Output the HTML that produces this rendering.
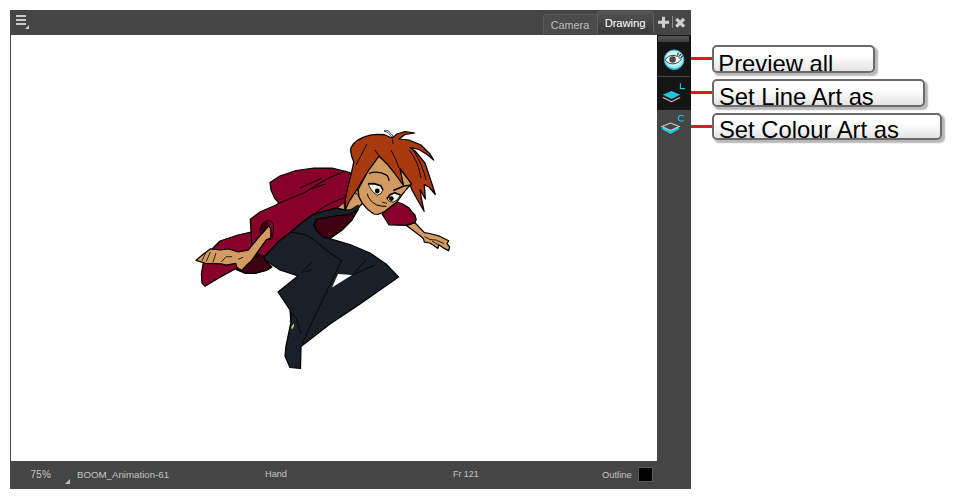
<!DOCTYPE html>
<html><head><meta charset="utf-8">
<style>
html,body{margin:0;padding:0;background:#fff;}
body{width:957px;height:499px;position:relative;overflow:hidden;font-family:"Liberation Sans",sans-serif;}
.abs{position:absolute;}
#panel{left:10px;top:10px;width:681px;height:479px;background:#454545;}
#canvas{left:11px;top:35px;width:646px;height:426px;background:#fff;}
.tab{font-size:10px;color:#c8c8c8;text-align:center;box-sizing:border-box;}
#tabCam{left:543px;top:14px;width:55px;height:20px;background:#4b4b4b;border:1px solid #5a5a5a;border-bottom:none;border-radius:3px 3px 0 0;line-height:21px;color:#bdbdbd;font-size:10.8px;text-indent:-1px;}
#tabDraw{left:597px;top:11px;width:57px;height:22px;background:linear-gradient(#525252,#3a3a3a);border:1px solid #5e5e5e;border-bottom:none;border-radius:3px 3px 0 0;line-height:22px;color:#fff;font-size:11.3px;letter-spacing:-0.1px;text-indent:-1px;}
#tbar{left:657px;top:35px;width:33.5px;height:74.5px;background:#151515;}
#handle{left:658px;top:36px;width:31px;height:6px;background:linear-gradient(#565656,#3e3e3e);}
#sep1{left:657px;top:76px;width:33px;height:1px;background:#4a4a4a;}
.red{height:3px;background:#e2181e;left:691px;width:22px;}
.box{left:712px;box-sizing:border-box;border:2px solid #6a6a6a;border-radius:5px;background:linear-gradient(#ffffff 35%,#e4e4e4);box-shadow:2.5px 2.5px 1.5px #b8b8b8;overflow:hidden;font-size:23.8px;color:#000;white-space:nowrap;}
.box span{position:absolute;left:5px;top:3.5px;line-height:26px;}
.st{font-size:9.7px;color:#c6c6c6;top:469px;line-height:11px;white-space:nowrap;}
</style></head><body>
<div id="panel" class="abs"></div>
<div id="canvas" class="abs"></div>
<!-- menu icon -->
<svg class="abs" style="left:14px;top:13px" width="18" height="18" viewBox="14 13 18 18">
<rect x="16" y="15" width="10" height="2" fill="#c9c9c9"/><rect x="16" y="19" width="10" height="2" fill="#c9c9c9"/><rect x="16" y="23" width="10" height="2" fill="#c9c9c9"/>
<path d="M29 25 L29 29 L25 29 Z" fill="#c9c9c9"/></svg>
<div id="tabCam" class="abs tab">Camera</div>
<div id="tabDraw" class="abs tab">Drawing</div>
<!-- plus / x -->
<svg class="abs" style="left:656px;top:14px" width="34" height="18" viewBox="656 14 34 18">
<path d="M662 16.7h3v4h4v3h-4v4h-3v-4h-4v-3h4z" fill="#cfcfcf"/>
<rect x="672" y="16" width="1" height="12" fill="#8a8a8a"/>
<path d="M676.3 18.8 L684 26.6 M684 18.8 L676.3 26.6" stroke="#cfcfcf" stroke-width="3.2" fill="none"/></svg>
<div id="tbar" class="abs"></div>
<div id="handle" class="abs"></div>
<div id="sep1" class="abs"></div>
<svg class="abs" style="left:657px;top:35px" width="35" height="110" viewBox="657 35 35 110">
<defs>
<radialGradient id="eg" cx="50%" cy="42%" r="55%">
<stop offset="0" stop-color="#f4fcfd"/><stop offset="0.7" stop-color="#c9eef4"/><stop offset="0.9" stop-color="#8fe0ec"/><stop offset="1" stop-color="#25c2dc"/>
</radialGradient>
</defs>
<!-- eye -->
<circle cx="674.1" cy="59.7" r="9.8" fill="url(#eg)" stroke="#1bbad6" stroke-width="1"/>
<path d="M665.2,59.8 C668.2,54 677.6,54 681,59.6 C677.6,65.2 668.2,65.2 665.2,59.8 Z" fill="#fff" stroke="#3a3a3a" stroke-width="1"/>
<circle cx="672.6" cy="59.5" r="3.3" fill="#474747"/>
<g stroke="#2e3a3c" stroke-width="1.2" fill="none"><path d="M677.3,55.6 L678.4,52.8"/><path d="M679.2,56.4 L680.9,53.8"/><path d="M680.8,58 L682.8,55.6"/></g>
<!-- L layers -->
<path d="M662.8,97.5 L671.5,101.7 L680.2,97.5" fill="none" stroke="#cfcfcf" stroke-width="1.1"/>
<path d="M662.8,94.8 L671.5,90.9 L680.2,94.8 L671.5,99 Z" fill="#1fc4e0"/>
<path d="M680.4,83.2 V88.6 H685" fill="none" stroke="#1fc4e0" stroke-width="1.1"/>
<!-- C layers -->
<path d="M661.9,129.3 L670.6,133.9 L679.2,129.3 L679.2,127.5 L661.9,127.5 Z" fill="#1fc4e0"/>
<path d="M661.9,126.6 L670.6,123 L679.2,126.6 L670.6,130.5 Z" fill="#454545" stroke="#cfcfcf" stroke-width="1.1"/>
<path d="M683.6,116.3 A3,3 0 1 0 683.6,120.1" fill="none" stroke="#1fc4e0" stroke-width="1.1"/>
</svg>

<div class="abs red" style="top:57px"></div>
<div class="abs red" style="top:91px"></div>
<div class="abs red" style="top:125px"></div>
<div class="abs box" style="top:45px;width:163px;height:28.4px"><span style="left:4.3px">Preview all</span></div>
<div class="abs box" style="top:79.4px;width:213px;height:27.8px"><span style="top:3.1px">Set Line Art as</span></div>
<div class="abs box" style="top:112.6px;width:230px;height:27.4px"><span style="top:2.9px">Set Colour Art as</span></div>
<!-- status -->
<div class="abs st" style="left:30.5px;font-size:10px;letter-spacing:0.2px">75%</div>
<svg class="abs" style="left:65px;top:479px" width="5" height="5"><path d="M5 0V5H0Z" fill="#bdbdbd"/></svg>
<div class="abs st" style="left:77px">BOOM_Animation-61</div>
<div class="abs st" style="left:265px;font-size:9.2px">Hand</div>
<div class="abs st" style="left:453px;font-size:8.9px">Fr 121</div>
<div class="abs st" style="left:602px;font-size:9.4px">Outline</div>
<div class="abs" style="left:638px;top:467px;width:15px;height:15px;background:#000;border:1px solid #5a5a5a;box-sizing:border-box"></div>
<svg class="abs" style="left:0;top:0" width="957" height="499" viewBox="0 0 957 499" shape-rendering="geometricPrecision">
<g stroke="#000" stroke-width="1.25" stroke-linejoin="round">
<!-- lower flap of cape (behind hand) -->
<path d="M251,232 L238,235 L220,241 L213,248 L203.2,263.9 L201.4,273.5 L202,283.1 L205,286.3 L220.1,277.1 L235.7,268.7 L246,268 L262,256 Z" fill="#86002a"/>
<!-- dark inner cape under hand -->
<path d="M236,268.5 L245.4,266.9 L251,261 L260,252.2 L264.4,256.4 L265.8,261.3 L272,266.9 L266.5,270.4 L255.2,273.4 L245.4,273.4 L237,269.9 Z" fill="#3f0013"/>
<!-- navy body + legs -->
<path d="M311,215 L324,211 L337.3,208 L345,210.4 L350.5,211.5 L359.3,205.5 L358,210 L351.6,220.3 L341.7,230.2 L329.6,238.7 L350,244.5 L370,253 L386,264 L398.5,277 L380,290 L360,304 L330,324 L301,346.5 L300.5,368.5 L290,367.5 L285,356 L286,346 L291,322 L290,310 L278,292 L298,276 L280,270 L265,260 L264,254 L292,228 Z" fill="#1a2029"/>
<!-- white gap between legs -->
<path d="M338,274 L352,275 L332,287.5 Z" fill="#fff" stroke="none"/>
<!-- dark crimson inner near chest -->
<path d="M316.3,219.2 L335,216 L350.5,214.3 L357.1,210 L351.6,220.3 L341.7,230.2 L329.6,238.5 L323,236.9 L316.3,230.2 L314.1,224.7 Z" fill="#3f0013"/>
<!-- main cape -->
<path d="M270,182.5 L280,176 L296,170.5 L314,168 L332,168 L350,172.5 L353,178 L350,195 L345,210 L337.3,207.7 L324,211 L313,214.3 L302,222.5 L289,233.5 L280,240.2 L264.4,256.4 L258,254 L251.7,243 L250.3,219.2 L260,212 L276,205 L279,203 L274.5,198 L271,190 Z" fill="#86002a"/>

<!-- arm hole -->
<path d="M259.5,230 L262,224 L266.5,220.6 L271,221 L273.5,224.8 L273.3,232 L272,238.8 L268,240 L262,236 Z" fill="#86002a" stroke-width="0.8"/>
<path d="M260.2,230.4 L262.3,224.1 L267.2,222 L269.3,224.8 L263.7,231.5 Z" fill="#3f0013" stroke-width="0.6"/>
<!-- left arm + hand -->
<path d="M269,225.5 L270.9,230 L270.7,238.1 L266.5,239.5 L251,261.3 L246.6,265.1 L241.7,270.5 L236.9,267.5 L235.7,263.3 L226.1,265.1 L221.3,263.9 L205.6,263.3 L196,260.3 L203.2,254.3 L210.5,248.8 L220.1,250 L228.5,248.8 L238.1,251.8 L248.2,250.1 L258,238 Z" fill="#d39a62"/>
<!-- right sleeve -->
<path d="M382.1,214 L396.8,202.1 L401.8,203.5 L408.8,207.7 L412,212 L414.9,215 L416.2,219.5 L414.9,222.7 L406.3,225.4 L389.1,224.8 Z" fill="#86002a"/>
<!-- right arm + hand -->
<path d="M406.3,225.6 L414.9,222.7 L424.4,232.6 L429.8,233.5 L439.7,236.2 L448.7,240.7 L446.9,243.9 L449.6,246.6 L448.7,250.6 L444.2,248.4 L438.8,244.8 L437.9,248.4 L433.4,245.2 L429.8,243 L424.4,242.1 L423.5,238.9 L420.8,236.2 Z" fill="#d39a62"/>
<!-- leg inner lines, green spot -->
<g fill="none" stroke="#000" stroke-width="0.8">
<path d="M341.7,260 L311.6,323 L301,346.5"/><path d="M301.9,273 L311.7,262.4"/><path d="M304.7,272.3 L311.7,269.5"/>
<path d="M352,275 L375,265"/><path d="M355,272 L366,260"/>
<path d="M290,311 L296,318 L301,334"/><path d="M292,313 L290,322"/>

</g>
<path d="M291.2,327.5 L293.5,323.5 L294.2,326 L292,329.5 Z" fill="#b5e020" stroke="none"/>
<!-- cape fold lines -->
<g fill="none" stroke="#000" stroke-width="1">
<path d="M279,203.2 L305,192.4 L318,184 L331,177 L346,171"/><path d="M313,215 L322,208 L333,202 L346,197"/><path d="M300,188 L322,178"/><path d="M311,189 L325,184"/>
</g>
<!-- finger lines -->
<g fill="none" stroke="#000" stroke-width="0.8">
<path d="M205.6,253 L202,260.9"/><path d="M210.5,251.8 L206.2,261.5"/><path d="M215.9,253 L212.9,262.7"/>
<path d="M221.3,262 L226.1,256.7 L232.1,256.7"/><path d="M238.1,259.3 L243,257.3"/>
<path d="M424.4,236.5 L430,239.5 L436,240"/><path d="M436,240 L444,243.5"/><path d="M432,241 L438.5,244.8"/>
</g>
<!-- neck / ear -->
<path d="M337.3,208.2 L343.9,202.7 L344.6,209.5 Z" fill="#d39a62" stroke-width="0.7"/>
<path d="M291,232.4 Q304,233 313,239 L326,250 L342.3,261" fill="none" stroke-width="0.9"/>
<path d="M345.2,210.5 L349,199 L354,191 L358.2,189.5 L359,196.5 L362.5,203.5 L359.3,206.5 L350.5,212.5 Z" fill="#d39a62"/>
<path d="M336,210.5 L345,211.8 L351,211.3 L359.5,206" fill="none" stroke="#1a2029" stroke-width="3"/>
<path d="M337.3,208.3 L345,210 L351,209.5 L358,205" fill="none" stroke-width="0.9"/>
<path d="M355,194 Q357.5,192 358.5,196" fill="none" stroke-width="0.8"/>
<!-- face -->
<path d="M379,156 L388,164 L397,166 L400,168 L411.6,183.9 L410.2,185.3 L407.4,188.1 L401.8,195.1 L396.8,202.1 L384.9,211.2 L378.6,214.3 L373.7,214 L368.1,209.8 L362.5,203.5 L358.9,196.5 L358.2,189.5 L368,171 Z" fill="#d39a62"/>
<!-- eyes -->
<path d="M368.1,183.9 L374,184 L380.7,186 L382.8,190.2 L381,193.5 L377.2,195.3 L373,192 L370.2,188.1 Z" fill="#f4f0e4" stroke-width="0.8"/>
<path d="M368.1,183.7 L374,183.6 L380.9,185.8 L383,190" fill="none" stroke-width="1.6"/>
<circle cx="377.3" cy="191" r="2.4" fill="#000" stroke="none"/>
<path d="M387,198.6 L390,195 L394.7,193 L400.4,195.1 L397,200 L393.3,202.1 L389.5,201.5 Z" fill="#f4f0e4" stroke-width="0.8"/>
<path d="M386.8,198.8 L390,194.8 L394.7,192.8 L400.6,195" fill="none" stroke-width="1.6"/>
<circle cx="391.3" cy="198.6" r="2.4" fill="#000" stroke="none"/>
<!-- brows, smile -->
<path d="M368.8,173.5 Q378,170 387,175.4 Q388.8,178 389.1,181" fill="none" stroke-width="1.3"/>
<path d="M393.3,190.4 L403.9,186 L410.2,185.3" fill="none" stroke-width="1.6"/>
<path d="M367.4,193.7 Q368,200 376.5,204.9 Q381,206.5 386.3,206.3" fill="none" stroke-width="1"/>
<path d="M382,202 L387,203.5" fill="none" stroke-width="0.8"/>
<!-- hair -->
<path d="M345.4,209.5 L345.2,199.5 L348,186.5 L351.3,173.5 L353.8,162 L351.6,156 L350.6,151 L351,147.5 L353.5,143.8 L357,140.6 L363,137.4 L370,135.2 L377,134.4 L384.5,134.7 L392,138 L397,134 L405,131.5 L414.6,133 L405,134.5 L399,139 L409,140 L421,145 L430,154 L433.7,160 L427,154.5 L419,149.5 L410,147.5 L415,151 L425,163 L429,175 L432,184 L435.3,194.5 L429,187 L424.3,184.6 L424.8,191 L425.3,199 L422,193 L420,189.6 L421.5,199 L424.1,211.3 L417,199 L412,190 L410.2,185.3 L411.6,183.9 L400,168.5 L403.5,185.5 L394,172.5 L388,165 L379,156 L368,171 L358,187.8 L349.5,200.8 Z" fill="#a9390f"/>
<!-- hair strands -->
<g fill="none" stroke-width="0.9">
<path d="M367,144 L356,165"/><path d="M391,150 L396,160 L399,168"/><path d="M392.5,139.5 L393,144"/>
<path d="M409,150 Q418,160 421,178"/><path d="M413,150 Q423,165 426,180"/><path d="M375,150 L379,156"/>
</g>
<!-- wisp -->
<path d="M384,131 L388,130.5 L393,136 L391.5,136.5 L388,132.5 Z" fill="#fff" stroke-width="0.7"/>
</g>
</svg>

</body></html>
